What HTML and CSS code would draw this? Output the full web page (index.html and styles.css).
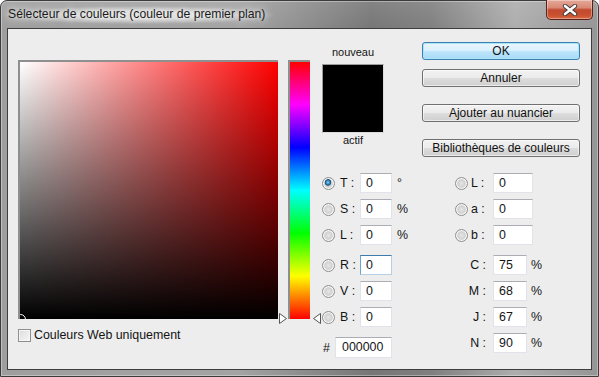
FILE: index.html
```html
<!DOCTYPE html>
<html lang="fr">
<head>
    <meta charset="UTF-8">
    <title>Sélecteur de couleurs</title>
    <link rel="stylesheet" href="styles.css">
</head>
<body>
    <div class="window">
        <div class="titlebar">
            <span class="title">Sélecteur de couleurs (couleur de premier plan)</span>
            <button class="close" aria-label="Fermer">
                <svg width="16" height="12" viewBox="0 0 16 12">
                    <path d="M3 2 L13 10 M13 2 L3 10" stroke="#3a3a3a" stroke-width="4.4" stroke-linecap="round"/>
                    <path d="M3 2 L13 10 M13 2 L3 10" stroke="#fff" stroke-width="2.6" stroke-linecap="round"/>
                </svg>
            </button>
        </div>
        <div class="client">
            <div class="picker">
                <div class="field"><span class="marker"></span></div>
                <div class="web"><span class="check"></span>Couleurs Web uniquement</div>
            </div>

            <div class="hue">
                <div class="hue-bar"></div>
                <svg class="arrow arrow-left" width="9" height="11" viewBox="0 0 9 11">
                    <polygon points="0.5,0.5 0.5,10.5 7.5,5.5" fill="#fff" stroke="#555"/>
                </svg>
                <svg class="arrow arrow-right" width="9" height="11" viewBox="0 0 9 11">
                    <polygon points="8.5,0.5 8.5,10.5 1.5,5.5" fill="#fff" stroke="#555"/>
                </svg>
            </div>

            <div class="mid">
                <div class="swatch">
                    <span class="cap">nouveau</span>
                    <div class="color-box"></div>
                    <span class="cap cap-low">actif</span>
                </div>
                <div class="fields">
                    <div class="row"><span class="radio on"></span><span class="lbl">T :</span><span class="box">0</span><span class="unit">°</span></div>
                    <div class="row"><span class="radio"></span><span class="lbl">S :</span><span class="box">0</span><span class="unit">%</span></div>
                    <div class="row"><span class="radio"></span><span class="lbl">L :</span><span class="box">0</span><span class="unit">%</span></div>
                    <div class="row group"><span class="radio"></span><span class="lbl">R :</span><span class="box focus">0</span></div>
                    <div class="row"><span class="radio"></span><span class="lbl">V :</span><span class="box">0</span></div>
                    <div class="row"><span class="radio"></span><span class="lbl">B :</span><span class="box">0</span></div>
                    <div class="row group hex"><span class="hash">#</span><span class="box wide">000000</span></div>
                </div>
            </div>

            <div class="side">
                <button class="btn default">OK</button>
                <button class="btn">Annuler</button>
                <button class="btn spaced">Ajouter au nuancier</button>
                <button class="btn spaced">Bibliothèques de couleurs</button>
                <div class="fields side-fields">
                    <div class="row"><span class="radio"></span><span class="lbl lab">L :</span><span class="box lab-box">0</span></div>
                    <div class="row"><span class="radio"></span><span class="lbl lab">a :</span><span class="box lab-box">0</span></div>
                    <div class="row"><span class="radio"></span><span class="lbl lab">b :</span><span class="box lab-box">0</span></div>
                    <div class="row group"><span class="lbl cmyk">C :</span><span class="box">75</span><span class="unit">%</span></div>
                    <div class="row"><span class="lbl cmyk">M :</span><span class="box">68</span><span class="unit">%</span></div>
                    <div class="row"><span class="lbl cmyk">J :</span><span class="box">67</span><span class="unit">%</span></div>
                    <div class="row"><span class="lbl cmyk">N :</span><span class="box">90</span><span class="unit">%</span></div>
                </div>
            </div>
        </div>
    </div>
</body>
</html>
```

FILE: styles.css
```css
body {
    margin: 0;
    padding: 0;
    background: #fff;
    font-family: 'Liberation Sans', Arial, sans-serif;
    color: #141414;
}

.window {
    width: 599px;
    height: 377px;
    box-sizing: border-box;
    display: flex;
    flex-direction: column;
    padding: 0 6px 6px 6px;
    border: 1px solid #3b3b3b;
    border-radius: 7px 7px 0 0;
    background:
        linear-gradient(to bottom, rgba(255, 255, 255, 0.1), rgba(255, 255, 255, 0) 30px),
        linear-gradient(to right, #9e9e9e 0%, #a3a3a3 40%, #767676 62%, #7f7f7f 72%, #adadad 86%, #959595 100%);
    box-shadow: inset 0 0 0 1px rgba(255, 255, 255, 0.35);
}

.titlebar {
    height: 27px;
    margin: 0 -6px;
    display: flex;
    align-items: flex-start;
}

.title {
    margin: 5px 0 0 3px;
    padding: 1px 10px 2px 4px;
    font-size: 12.2px;
    line-height: 15px;
    color: #1a1a1a;
    background: radial-gradient(ellipse at center, rgba(255, 255, 255, 0.6) 30%, rgba(255, 255, 255, 0) 72%);
    text-shadow: 0 0 6px rgba(255, 255, 255, 0.9), 0 0 10px rgba(255, 255, 255, 0.8);
}

.close {
    margin: -1px 5px 0 auto;
    width: 47px;
    height: 20px;
    padding: 0;
    display: flex;
    align-items: center;
    justify-content: center;
    border: 1px solid #5a2118;
    border-top: none;
    border-radius: 0 0 5px 5px;
    background: linear-gradient(to bottom, #e6a898 0%, #d98a75 40%, #c24a30 52%, #c9512f 80%, #d86a45 100%);
    box-shadow: inset 0 0 0 1px rgba(255, 255, 255, 0.35);
}

.client {
    flex: 1;
    display: flex;
    align-items: flex-start;
    border: 1px solid #3d3d3d;
    background: #ededed;
    font-size: 12px;
}

/* colour field */
.picker {
    margin: 31px 0 0 10px;
}

.field {
    position: relative;
    overflow: hidden;
    width: 260px;
    height: 259px;
    box-sizing: border-box;
    border-top: 2px solid #8f8f8f;
    border-left: 2px solid #8f8f8f;
    background:
        linear-gradient(to top, #000, rgba(0, 0, 0, 0)),
        linear-gradient(to right, #fff, #f00);
}

.marker {
    position: absolute;
    left: -5px;
    bottom: -6px;
    width: 9px;
    height: 9px;
    border: 1px solid #fff;
    border-radius: 50%;
}

.web {
    margin-top: 10px;
    display: flex;
    align-items: center;
    font-size: 12.4px;
    line-height: 13px;
}

.check {
    width: 13px;
    height: 13px;
    box-sizing: border-box;
    margin-right: 3px;
    border: 1px solid #8e8f8f;
    background: linear-gradient(135deg, #dcdcdc, #f7f7f7);
    box-shadow: inset 0 0 0 1px #f4f4f4;
}

/* hue slider */
.hue {
    position: relative;
    margin: 31px 0 0 10px;
}

.hue-bar {
    width: 22px;
    height: 259px;
    box-sizing: border-box;
    border-top: 2px solid #8f8f8f;
    border-left: 2px solid #8f8f8f;
    background: linear-gradient(to bottom, #f00 0%, #f0f 16.6%, #00f 33.3%, #0ff 50%, #0f0 66.6%, #ff0 83.3%, #f00 100%);
}

.arrow {
    position: absolute;
    top: 253px;
}

.arrow-left {
    left: -9px;
}

.arrow-right {
    left: 24px;
}

/* middle column */
.mid {
    width: 90px;
    margin: 17px 0 0 11px;
}

.swatch {
    width: 62px;
    margin-left: 1px;
    display: flex;
    flex-direction: column;
    align-items: center;
}

.cap {
    font-size: 11px;
    line-height: 13px;
}

.color-box {
    width: 62px;
    height: 69px;
    margin-top: 5px;
    box-sizing: border-box;
    background: #000;
    border: 1px solid #dcdcdc;
    border-top-color: #9d9d9d;
    border-left-color: #9d9d9d;
}

.cap-low {
    margin-top: 1px;
}

.fields {
    margin-top: 26px;
}

.row {
    height: 20px;
    margin-top: 6px;
    display: flex;
    align-items: center;
}

.row:first-child {
    margin-top: 0;
}

.row.group {
    margin-top: 10px;
}

.radio {
    width: 13px;
    height: 13px;
    box-sizing: border-box;
    margin-left: 1px;
    border: 1px solid #8e8f8f;
    border-radius: 50%;
    background: radial-gradient(circle at 50% 50%, #e6e6e6 0, #d2d2d2 45%, #f2f2f2 100%);
    box-shadow: inset 0 0 0 1px #f8f8f8;
}

.radio.on {
    background:
        radial-gradient(circle at 45% 40%, #8fd2f2 0, #2c7fb8 2px, #124a77 3px, rgba(18, 74, 119, 0) 3.6px),
        radial-gradient(circle at 50% 50%, #e6e6e6 0, #d2d2d2 45%, #f2f2f2 100%);
}

.lbl {
    width: 20px;
    margin-left: 5px;
    font-size: 12.4px;
    white-space: nowrap;
}

.box {
    width: 32px;
    height: 20px;
    box-sizing: border-box;
    padding-left: 5px;
    border: 1px solid #e2e3ea;
    border-top-color: #abadb3;
    background: #fff;
    font-size: 12.4px;
    line-height: 18px;
}

.box.focus {
    border-color: #b5cfe7;
    border-top-color: #3d7bad;
    border-left-color: #6fa3cf;
}

.unit {
    margin-left: 5px;
    font-size: 12.4px;
}

.hex {
    height: 21px;
}

.hash {
    width: 12px;
    margin-left: 2px;
    font-size: 12.4px;
}

.box.wide {
    width: 57px;
    height: 21px;
    padding-left: 6px;
}

/* right column */
.side {
    width: 158px;
    margin: 13px 0 0 11px;
    display: flex;
    flex-direction: column;
}

.btn {
    height: 18px;
    width: 158px;
    margin-top: 9px;
    padding: 0;
    border: 1px solid #707070;
    border-radius: 3px;
    font-family: 'Liberation Sans', Arial, sans-serif;
    font-size: 12px;
    line-height: 15px;
    color: #111;
    background: linear-gradient(to bottom, #f2f2f2 0%, #ebebeb 50%, #dddddd 51%, #cfcfcf 100%);
    box-shadow: inset 0 0 0 1px rgba(255, 255, 255, 0.6);
}

.btn.default {
    margin-top: 0;
    border-color: #3c7fb1;
    background: linear-gradient(to bottom, #eaf6fd 0%, #d9f0fc 50%, #bee6fd 51%, #a7d9f5 100%);
    box-shadow: inset 0 0 0 1px #a9e4f7;
}

.btn.spaced {
    margin-top: 17px;
}

.side-fields {
    margin-top: 16px;
}

.side-fields .radio {
    margin-left: 33px;
}

.lbl.lab {
    width: 22px;
    margin-left: 3px;
}

.box.lab-box {
    width: 40px;
}

.lbl.cmyk {
    width: 67px;
    margin: 0 4px 0 0;
    text-align: right;
    padding-right: 3px;
    box-sizing: border-box;
}

.side-fields .box {
    padding-left: 5px;
}

.side-fields .unit {
    margin-left: 4px;
}

.side-fields .box:not(.lab-box) {
    width: 34px;
}
```
